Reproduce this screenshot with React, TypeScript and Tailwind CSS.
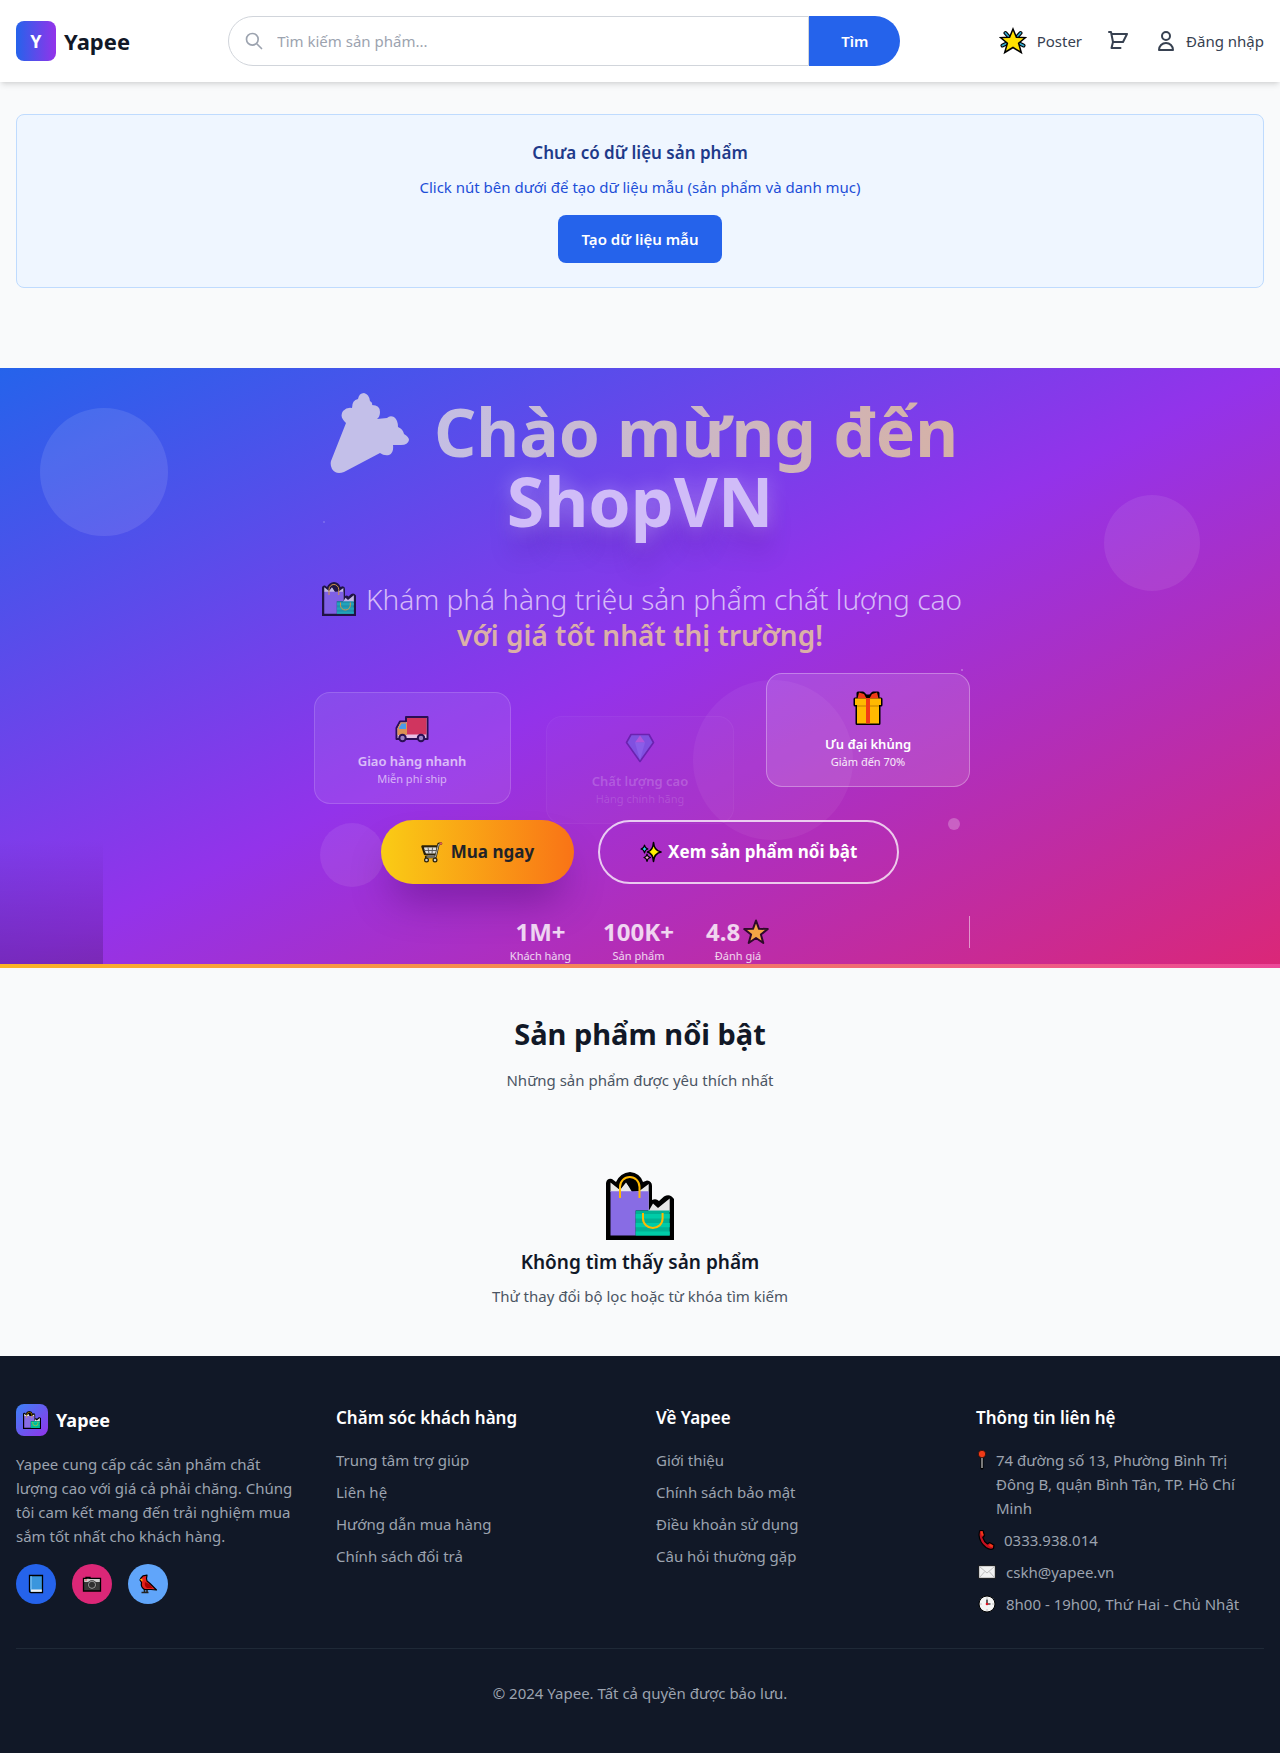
import React from "react";

type IconProps = { className?: string };

function BagsIcon({ className }: IconProps) {
  return (
    <svg viewBox="0 0 68 68" className={className} aria-hidden="true">
      <path d="M0 68V11Q1 6 6 7L10 10Q14 1 24 0Q34 1 37 10L41 8.500Q46 9 46 14V28Q50 26 53 29L58 24.500Q64 21 68 27V68Z" fill="#000" />
      <path d="M4.500 20V10.500L14 18L20 10.500L27 19.500L34 18.500L42.700 12V39L47 31.500L52 36L63.700 26.500V40H42V20Z" fill="#e6e6e6" />
      <path d="M26 20L20.500 10.500Q27 8 31 13L34 19Z" fill="#000" />
      <path d="M4.500 19.300H42.700V38.500H29.700V63.500H4.500Z" fill="#886ce4" />
      <path d="M29.700 38.500H63.700V63.500H29.700Z" fill="#00b294" />
      <path d="M29.700 42H63.700V46.500H29.700ZM29.700 51H63.700V55.300H29.700ZM29.700 59.500H63.700V63.500H29.700Z" fill="#00cca8" />
      <path d="M14 26V15a9.700 10 0 0 1 19.500 0V26M37 41v5.500a9.800 9.500 0 0 0 19.600 0V41" fill="none" stroke="#ffb900" strokeWidth="2" />
    </svg>
  );
}

function GlowStarIcon({ className }: IconProps) {
  return (
    <svg viewBox="0 0 28 28" className={className} aria-hidden="true">
      <g strokeLinecap="round">
        <path d="M6.500 6l3.500 4M21.500 6l-3.500 4M3.500 18.500l5-2.500M24.500 18.500l-5-2.500" stroke="#000" strokeWidth="4" />
        <path d="M6.500 6l3.500 4M21.500 6l-3.500 4M3.500 18.500l5-2.500M24.500 18.500l-5-2.500" stroke="#31a9cf" strokeWidth="1.800" />
      </g>
      <path d="M14 2L17.400 10.200L26.500 10.600L19.600 16.200L22.300 25.500L14 20.500L5.700 25.500L8.400 16.200L1.500 10.600L10.600 10.200Z" fill="#ffe100" stroke="#000" strokeWidth="1.500" />
    </svg>
  );
}

function SearchIcon({ className }: IconProps) {
  return (
    <svg viewBox="0 0 24 24" className={className} fill="none" stroke="currentColor" strokeWidth="2" strokeLinecap="round" strokeLinejoin="round" aria-hidden="true">
      <path d="M21 21l-6-6m2-5a7 7 0 11-14 0 7 7 0 0114 0z" />
    </svg>
  );
}

function CartIcon({ className }: IconProps) {
  return (
    <svg viewBox="0 0 24 24" className={className} fill="none" stroke="currentColor" strokeWidth="2" strokeLinecap="round" strokeLinejoin="round" aria-hidden="true">
      <path d="M3 3h2l.4 2M7 13h10l4-8H5.400m0 0L7 13m0 0l-1.500 6m0 0h9" />
    </svg>
  );
}

function UserIcon({ className }: IconProps) {
  return (
    <svg viewBox="0 0 24 24" className={className} fill="none" stroke="currentColor" strokeWidth="2" strokeLinecap="round" strokeLinejoin="round" aria-hidden="true">
      <path d="M16 7a4 4 0 11-8 0 4 4 0 018 0zM12 14a7 7 0 00-7 7h14a7 7 0 00-7-7z" />
    </svg>
  );
}

function PopperIcon({ className }: IconProps) {
  return (
    <svg viewBox="0 0 80 80" className={className} aria-hidden="true">
      <path
        d="M1 68L16 30Q9 24 13 18Q17 14 22 15Q22 7 28 6Q29 0 34 0Q39 1 40 8Q43 10 42 12Q50 12 50 19Q50 24 47 26L57 25Q60 22 64 24Q68 27 68 34Q73 36 74 41Q79 44 79 47Q78 52 71 52H63Q64 60 59 62Q54 63 50 60L14 79Q6 82 2 76Q0 72 1 68Z"
        fill="#c3bfe9"
      />
    </svg>
  );
}

function TruckIcon({ className }: IconProps) {
  return (
    <svg viewBox="0 0 34 28" className={className} aria-hidden="true">
      <path d="M1.500 24V13L5 6.500H11V2H32.500V24Z" fill="#e8bfe6" stroke="#2a0f55" strokeWidth="2" strokeLinejoin="round" />
      <path d="M12 3H31.500V19.500H12Z" fill="#d0355f" />
      <path d="M2.500 13.500L5.500 7.500H12V20H2.500Z" fill="#dc9155" />
      <path d="M4 13L6.500 8.500H11V14H4Z" fill="#4a9be8" />
      <circle cx="7.500" cy="23" r="3.200" fill="#9b7fc4" stroke="#2a0f55" strokeWidth="2" />
      <circle cx="26" cy="23" r="3.200" fill="#9b7fc4" stroke="#2a0f55" strokeWidth="2" />
    </svg>
  );
}

function GemIcon({ className }: IconProps) {
  return (
    <svg viewBox="0 0 30 30" className={className} aria-hidden="true">
      <path d="M6 1.500H24L28.500 9.500L15 28.500L1.500 9.500Z" fill="#8050e0" stroke="#6b22b0" strokeWidth="1.600" strokeLinejoin="round" />
      <path d="M15 2.500L20 9.500H10Z" fill="#b254dc" />
      <path d="M10 9.500H20L15 27Z" fill="#8a5ee8" />
    </svg>
  );
}

function GiftIcon({ className }: IconProps) {
  return (
    <svg viewBox="0 0 30 36" className={className} aria-hidden="true">
      <g stroke="#000" strokeWidth="3" strokeLinejoin="round">
        <path d="M5 8V3L10 3L13 6H17L20 3L25 3V8Z" fill="#000" />
        <path d="M2 9H28V15H26V33.500H4V15H2Z" fill="#000" />
      </g>
      <path d="M4.500 8.500L6 2.500L11 4L13.500 8.500ZM25.500 8.500L24 2.500L19 4L16.500 8.500Z" fill="#f03a17" />
      <path d="M2 8.500H28V15H2ZM4 15H26V33.500H4Z" fill="#ffb900" />
      <path d="M4 15H26V17H4Z" fill="#e09b00" />
      <path d="M13 8H17V33.500H13Z" fill="#f03a17" />
    </svg>
  );
}

function ShoppingCartIcon({ className }: IconProps) {
  return (
    <svg viewBox="0 0 22 22" className={className} aria-hidden="true">
      <path d="M20 2.500L17.500 3L14.500 16H5M1.500 5.500H16.500L15 13H4Z" fill="#ccc" stroke="#2b2108" strokeWidth="2.400" strokeLinejoin="round" strokeLinecap="round" />
      <path d="M3 6.500H15.500L14.200 12.500H5Z" fill="#dcdcdc" />
      <path d="M3 9.500H15M7 6.500L8 12.500M11.500 6.500L11 12.500" stroke="#555" strokeWidth="0.900" />
      <path d="M5.500 16H14.500L17.500 3.500L20 2.500" fill="none" stroke="#bbb" strokeWidth="1" />
      <circle cx="5.500" cy="19" r="1.900" fill="#ccc" stroke="#2b2108" strokeWidth="1.200" />
      <circle cx="14" cy="19" r="1.900" fill="#ccc" stroke="#2b2108" strokeWidth="1.200" />
      <circle cx="20" cy="2.500" r="1.200" fill="#e06050" />
    </svg>
  );
}

function SparklesIcon({ className }: IconProps) {
  return (
    <svg viewBox="0 0 22 22" className={className} strokeLinejoin="round" aria-hidden="true">
      <path d="M13.500 1.500Q14 9.500 21 11Q14 12.500 13.500 20.500Q13 12.500 7.500 11Q13 9.500 13.500 1.500Z" fill="#fff100" stroke="#000" strokeWidth="1.600" />
      <path d="M4.500 4Q5 7.500 8 8Q5 8.500 4.500 12Q4 8.500 1 8Q4 7.500 4.500 4Z" fill="#31d2f7" stroke="#000" strokeWidth="1.200" />
      <path d="M7 13Q7.500 16 10.500 16.500Q7.500 17 7 20.500Q6.500 17 4 16.500Q6.500 16 7 13Z" fill="#f5a3cf" stroke="#000" strokeWidth="1.200" />
    </svg>
  );
}

function StarIcon({ className }: IconProps) {
  return (
    <svg viewBox="0 0 28 28" className={className} aria-hidden="true">
      <path d="M14 2.500L17 10.800L25.800 11L18.900 16.500L21.300 25L14 20L6.700 25L9.100 16.500L2.200 11L11 10.800Z" fill="#f3a645" stroke="#2e0a2b" strokeWidth="2" strokeLinejoin="round" />
    </svg>
  );
}

function BookIcon({ className }: IconProps) {
  return (
    <svg viewBox="0 0 18 20" className={className} aria-hidden="true">
      <path d="M2.500 1.500H15.500V18.500H4Q2.500 18.500 2.500 17Z" fill="#3a96dd" stroke="#000" strokeWidth="1.300" />
      <path d="M3.200 2.200H5V15.500H3.200Z" fill="#66b2ea" />
      <path d="M4 15.500H14.800V17.800H4Z" fill="#f2f2f2" />
    </svg>
  );
}

function CameraIcon({ className }: IconProps) {
  return (
    <svg viewBox="0 0 20 20" className={className} aria-hidden="true">
      <path d="M1.500 4.500H4V3.500H8V4.500H18.500V17H1.500Z" fill="#383838" stroke="#000" strokeWidth="1.300" />
      <path d="M2.200 5H17.800V8H2.200Z" fill="#ccc" />
      <circle cx="10" cy="10.800" r="4.500" fill="#222" />
      <circle cx="10" cy="10.800" r="3.600" fill="#2f2f2f" stroke="#9a9a9a" strokeWidth="1" />
      <path d="M3 5.500H5V6.500H3Z" fill="#e74856" />
    </svg>
  );
}

function BirdIcon({ className }: IconProps) {
  return (
    <svg viewBox="0 0 20 20" className={className} strokeLinejoin="round" aria-hidden="true">
      <path d="M6.500 15V18.500M9 15V18.500M3.500 18.500H10.500" stroke="#222" strokeWidth="1.600" />
      <path d="M3 4L5 1.800L9 1.200L8.500 4.500L9 7L12 9.500L18.500 16L13 15.500L6.500 15.500Q2.500 13 3.500 8.500L2 6Z" fill="#e3201b" stroke="#000" strokeWidth="1.200" />
      <path d="M7 8L12 10.500L14.500 14H9Q6 12 7 8Z" fill="#a80000" />
      <path d="M1.800 5.500L4.200 4.500L4.500 7.500Z" fill="#ffb900" />
    </svg>
  );
}

function PinIcon({ className }: IconProps) {
  return (
    <svg viewBox="0 0 8 22" className={className} aria-hidden="true">
      <path d="M4 8V20" stroke="#000" strokeWidth="3" strokeLinecap="round" />
      <path d="M4 8V20" stroke="#ccc" strokeWidth="1.200" />
      <circle cx="4" cy="6" r="3.700" fill="#f03a17" stroke="#000" strokeWidth="0.600" />
    </svg>
  );
}

function PhoneIcon({ className }: IconProps) {
  return (
    <svg viewBox="0 0 18 22" className={className} aria-hidden="true">
      <path d="M2 1.500L5 1.500L6.500 6.500L4.800 8.500Q6 12.500 9.500 15L11.500 13.500L16 16L15.500 19.500Q12.500 21.500 8 18.500Q1.500 13.500 1 6Q1 3 2 1.500Z" fill="#c50f1f" stroke="#000" strokeWidth="1.200" strokeLinejoin="round" />
      <path d="M2.500 2.500L4.500 2.300L5.500 6L3.800 7ZM12 14.800L15 16.500L14.500 18.500L11 17Z" fill="#f03a17" />
    </svg>
  );
}

function MailIcon({ className }: IconProps) {
  return (
    <svg viewBox="0 0 18 14" className={className} aria-hidden="true">
      <path d="M0.700 0.700H17.300V13.300H0.700Z" fill="#f2f2f2" stroke="#000" strokeWidth="0.800" />
      <path d="M1.500 1.500L9 8L16.500 1.500M1.500 12.500L6.800 6.500M16.500 12.500L11.200 6.500" fill="none" stroke="#b8b8b8" strokeWidth="0.900" />
    </svg>
  );
}

function ClockIcon({ className }: IconProps) {
  return (
    <svg viewBox="0 0 18 18" className={className} aria-hidden="true">
      <circle cx="9" cy="9" r="8" fill="#f5f5f5" stroke="#000" strokeWidth="1" />
      <path d="M9 2.500V3.500M9 14.500V15.500M2.500 9H3.500M14.500 9H15.500" stroke="#888" strokeWidth="0.900" />
      <path d="M9 4.500V9" stroke="#222" strokeWidth="1.400" />
      <path d="M9 9H12.500" stroke="#222" strokeWidth="1.200" />
      <circle cx="9" cy="9" r="1.300" fill="#e81123" />
    </svg>
  );
}

function Header() {
  return (
    <header className="relative bg-white shadow-md">
      <div className="flex items-center justify-between px-4 py-4">
        <a href="#" className="flex items-center gap-2">
          <span className="flex size-10 items-center justify-center rounded-lg bg-linear-to-r/srgb from-[#2563eb] to-[#9333ea] text-lg font-bold text-white">
            Y
          </span>
          <span className="text-[22px] leading-8 font-bold text-[#111827]">Yapee</span>
        </a>
        <form className="mx-8 flex max-w-2xl flex-1" onSubmit={(e) => e.preventDefault()}>
          <div className="relative flex-1">
            <SearchIcon className="absolute top-[15px] left-4 size-5 text-[#9ca3af]" />
            <input
              type="text"
              aria-label="Tìm kiếm sản phẩm"
              placeholder="Tìm kiếm sản phẩm..."
              className="w-full rounded-l-full border border-[#d1d5db] bg-white py-3 pr-4 pl-12 leading-6 placeholder:text-[#9ca3af] focus:outline-none"
            />
          </div>
          <button type="submit" className="rounded-r-full bg-[#2563eb] px-8 font-semibold text-white">
            Tìm
          </button>
        </form>
        <nav className="flex items-center gap-6 text-[#374151]">
          <a href="#" className="flex items-center gap-2.5">
            <GlowStarIcon className="size-7" />
            Poster
          </a>
          <a href="#" aria-label="Giỏ hàng">
            <CartIcon className="size-6" />
          </a>
          <a href="#" className="flex items-center gap-2">
            <UserIcon className="size-6" />
            Đăng nhập
          </a>
        </nav>
      </div>
    </header>
  );
}

function SeedNotice() {
  return (
    <div className="px-4 pt-8 pb-20">
      <div className="rounded-lg border border-[#bfdbfe] bg-[#eff6ff] p-6 text-center">
        <h2 className="mb-2 text-[17px] leading-7 font-semibold text-[#1e3a8a]">Chưa có dữ liệu sản phẩm</h2>
        <p className="mb-4 text-[#1d4ed8]">Click nút bên dưới để tạo dữ liệu mẫu (sản phẩm và danh mục)</p>
        <button type="button" className="rounded-lg bg-[#2563eb] px-6 py-3 font-semibold text-white">
          Tạo dữ liệu mẫu
        </button>
      </div>
    </div>
  );
}

function HeroDecor() {
  return (
    <div className="pointer-events-none" aria-hidden="true">
      <div className="absolute top-10 left-10 size-32 rounded-full bg-white/10" />
      <div className="absolute top-[127px] right-20 size-24 rounded-full bg-white/8" />
      <div className="absolute top-[312px] left-1/2 ml-[53px] size-40 rounded-full bg-white/5" />
      <div className="absolute top-[455px] left-1/4 size-16 rounded-full bg-white/8" />
      <div className="absolute top-[450px] left-3/4 -ml-3 size-3 rounded-full bg-white/25" />
      <div className="absolute top-[153px] left-1/4 ml-[3px] size-0.5 bg-white/15" />
      <div className="absolute top-[301px] left-3/4 ml-px size-0.5 bg-white/25" />
      <div className="absolute bottom-0 left-0 h-32 w-[103px] bg-linear-to-t/srgb from-black/20 to-transparent" />
      <div className="absolute inset-x-0 bottom-0 h-1 bg-linear-to-r/srgb from-[#fbb424] to-[#ec4899]" />
    </div>
  );
}

const stats = [
  { value: "1M+", label: "Khách hàng", star: false },
  { value: "100K+", label: "Sản phẩm", star: false },
  { value: "4.8", label: "Đánh giá", star: true },
];

function Hero() {
  return (
    <section className="relative min-h-[600px] overflow-hidden bg-linear-to-br/srgb from-[#2563eb] via-[#9333ea] to-[#db2777]">
      <HeroDecor />
      <div className="relative mx-auto max-w-[660px] pt-7 text-center">
        <h1 className="text-[66px] leading-[70px] font-bold">
          <span className="flex items-center justify-center gap-6 pl-2">
            <PopperIcon className="-mt-1 -mb-2 size-20 shrink-0" />
            <span className="-mb-3 bg-linear-to-r/srgb from-[#c4bee4] to-[#d5b1a6] bg-clip-text pb-3 whitespace-nowrap text-transparent">
              Chào mừng đến
            </span>
          </span>
          <span className="block text-[68px] text-[#d0bcf8] [text-shadow:0_0_20px_rgba(255,255,255,0.3),0_25px_25px_rgba(60,0,120,0.2)]">
            ShopVN
          </span>
        </h1>
        <p className="mt-[45px] text-[28px] leading-9 font-light text-[#d6b9f8]">
          <span className="flex items-center justify-center gap-2.5 whitespace-nowrap pl-1">
            <BagsIcon className="size-[34px] shrink-0 opacity-70" />
            Khám phá hàng triệu sản phẩm chất lượng cao
          </span>
          <strong className="block font-semibold text-[#dbb0a8]">với giá tốt nhất thị trường!</strong>
        </p>

        <div className="mt-5 -mb-1 grid grid-cols-3 items-start gap-6">
          <div className="mx-auto mt-[19px] w-[197px] rounded-2xl border border-white/15 bg-white/8 py-4">
            <div className="mb-2 flex h-[34px] items-end justify-center">
              <TruckIcon className="w-[34px]" />
            </div>
            <div className="text-[13px] leading-5 font-semibold text-white/65">Giao hàng nhanh</div>
            <div className="text-[11px] leading-4 text-white/60">Miễn phí ship</div>
          </div>
          <div className="mx-auto mt-[43px] w-[188px] rounded-2xl border border-white/4 bg-white/2 py-4">
            <div className="mb-2 flex h-[30px] justify-center">
              <GemIcon className="size-[30px]" />
            </div>
            <div className="text-[13px] leading-5 font-semibold text-white/20">Chất lượng cao</div>
            <div className="text-[11px] leading-4 text-white/15">Hàng chính hãng</div>
          </div>
          <div className="rounded-2xl border border-white/30 bg-white/12 py-4">
            <div className="mb-2 flex h-9 justify-center">
              <GiftIcon className="h-9" />
            </div>
            <div className="text-[13px] leading-5 font-semibold text-white">Ưu đại khủng</div>
            <div className="text-[11px] leading-4 text-white/90">Giảm đến 70%</div>
          </div>
        </div>

        <div className="flex justify-center gap-6 text-[17px] font-bold">
          <button
            type="button"
            className="flex h-16 items-center gap-2 rounded-full bg-linear-to-r/srgb from-[#facc15] to-[#f97316] px-10 text-[#1f2328] shadow-[0_25px_40px_-10px_rgba(60,0,90,0.4)]"
          >
            <ShoppingCartIcon className="size-[22px]" />
            Mua ngay
          </button>
          <button type="button" className="flex h-16 items-center gap-1.5 rounded-full border-2 border-white/75 px-10 text-white">
            <SparklesIcon className="size-[22px]" />
            Xem sản phẩm nổi bật
          </button>
        </div>

        <div className="relative mt-8 flex justify-center gap-8 text-white/80">
          {stats.map((s) => (
            <div key={s.label}>
              <div className="flex items-center justify-center gap-0.5 text-[24px] leading-8 font-bold">
                {s.value}
                {s.star && <StarIcon className="size-7" />}
              </div>
              <div className="text-[11px] leading-4">{s.label}</div>
            </div>
          ))}
          <div className="absolute top-0 right-0 h-8 w-px bg-white/50" />
        </div>
      </div>
    </section>
  );
}

function Featured() {
  return (
    <section className="px-4 py-12 text-center">
      <h2 className="mb-4 text-[29px] leading-9 font-bold text-[#111827]">Sản phẩm nổi bật</h2>
      <p className="text-[#4b5563]">Những sản phẩm được yêu thích nhất</p>
      <div className="pt-20">
        <BagsIcon className="mx-auto mb-2 size-[68px]" />
        <h3 className="mb-2 text-[19px] leading-7 font-semibold text-[#111827]">Không tìm thấy sản phẩm</h3>
        <p className="text-[#4b5563]">Thử thay đổi bộ lọc hoặc từ khóa tìm kiếm</p>
      </div>
    </section>
  );
}

const linkColumns = [
  {
    title: "Chăm sóc khách hàng",
    links: ["Trung tâm trợ giúp", "Liên hệ", "Hướng dẫn mua hàng", "Chính sách đổi trả"],
  },
  {
    title: "Về Yapee",
    links: ["Giới thiệu", "Chính sách bảo mật", "Điều khoản sử dụng", "Câu hỏi thường gặp"],
  },
];

function Footer() {
  return (
    <footer className="bg-[#111827] px-4 py-12 text-[#9ca3af]">
      <div className="grid grid-cols-4 gap-8">
        <div>
          <div className="mb-4 flex items-center gap-2">
            <span className="flex size-8 items-center justify-center rounded-lg bg-linear-to-br/srgb from-[#3b82f6] to-[#9333ea]">
              <BagsIcon className="size-[18px]" />
            </span>
            <span className="text-[18px] leading-7 font-bold text-white">Yapee</span>
          </div>
          <p className="mb-4">
            Yapee cung cấp các sản phẩm chất lượng cao với giá cả phải chăng. Chúng tôi cam kết mang đến trải nghiệm mua
            sắm tốt nhất cho khách hàng.
          </p>
          <div className="flex gap-4">
            <a href="#" aria-label="Facebook" className="flex size-10 items-center justify-center rounded-full bg-[#2563eb]">
              <BookIcon className="h-5" />
            </a>
            <a href="#" aria-label="Instagram" className="flex size-10 items-center justify-center rounded-full bg-[#db2777]">
              <CameraIcon className="size-5" />
            </a>
            <a href="#" aria-label="Twitter" className="flex size-10 items-center justify-center rounded-full bg-[#60a5fa]">
              <BirdIcon className="size-5" />
            </a>
          </div>
        </div>
        {linkColumns.map((col) => (
          <div key={col.title}>
            <h3 className="mb-4 text-[17px] leading-7 font-semibold text-white">{col.title}</h3>
            <ul className="space-y-2">
              {col.links.map((l) => (
                <li key={l}>
                  <a href="#">{l}</a>
                </li>
              ))}
            </ul>
          </div>
        ))}
        <div>
          <h3 className="mb-4 text-[17px] leading-7 font-semibold text-white">Thông tin liên hệ</h3>
          <ul className="space-y-2">
            <li className="flex items-start gap-2.5">
              <PinIcon className="ml-0.5 h-[22px] shrink-0" />
              <span>74 đường số 13, Phường Bình Trị Đông B, quận Bình Tân, TP. Hồ Chí Minh</span>
            </li>
            <li className="flex items-center gap-2">
              <PhoneIcon className="ml-0.5 h-[22px]" />
              <span>0333.938.014</span>
            </li>
            <li className="flex items-center gap-2.5">
              <MailIcon className="ml-0.5 w-[18px]" />
              <span>cskh@yapee.vn</span>
            </li>
            <li className="flex items-center gap-2.5">
              <ClockIcon className="ml-0.5 size-[18px]" />
              <span>8h00 - 19h00, Thứ Hai - Chủ Nhật</span>
            </li>
          </ul>
        </div>
      </div>
      <div className="mt-8 border-t border-[#1f2937] pt-8 text-center">
        <p>© 2024 Yapee. Tất cả quyền được bảo lưu.</p>
      </div>
    </footer>
  );
}

export default function App() {
  return (
    <div className="bg-[#f9fafb] font-['Noto_Sans','Open_Sans',sans-serif] text-[15px] leading-6">
      <Header />
      <main>
        <SeedNotice />
        <Hero />
        <Featured />
      </main>
      <Footer />
    </div>
  );
}
